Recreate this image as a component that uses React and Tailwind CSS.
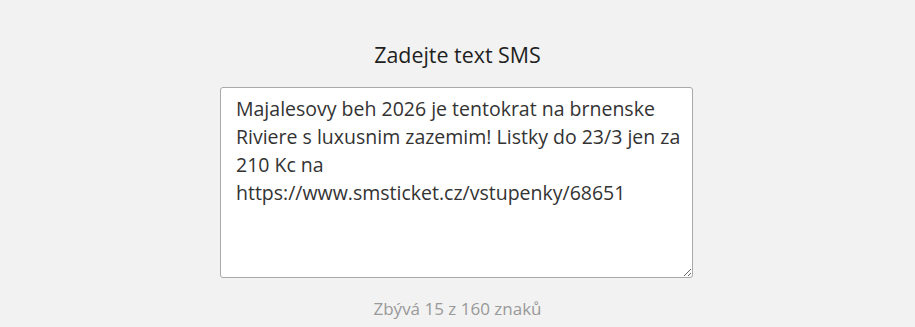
import React from 'react';

const SMS_TEXT =
  'Majalesovy beh 2026 je tentokrat na brnenske Riviere s luxusnim zazemim! Listky do 23/3 jen za 210 Kc na https://www.smsticket.cz/vstupenky/68651';

export default function App() {
  return (
    <div className="min-h-[327px] w-full bg-[#f2f2f2] flex flex-col items-center pt-[40px] font-['Open_Sans','Liberation_Sans',sans-serif]">
      <h2 className="text-[21.4px] leading-[30px] text-[#1f1f1f] font-normal">Zadejte text SMS</h2>
      <textarea
        className="mt-[17px] mr-[2px] w-[473px] h-[191px] bg-white border border-[#a9a9a9] rounded-[3px] pl-[15px] pr-[8px] py-[7px] text-[19.5px] leading-[28px] text-[#333] outline-none"
        defaultValue={SMS_TEXT}
      />
      <div className="mt-[21px] text-[17px] leading-[20px] text-[#999]">Zbývá 15 z 160 znaků</div>
    </div>
  );
}
